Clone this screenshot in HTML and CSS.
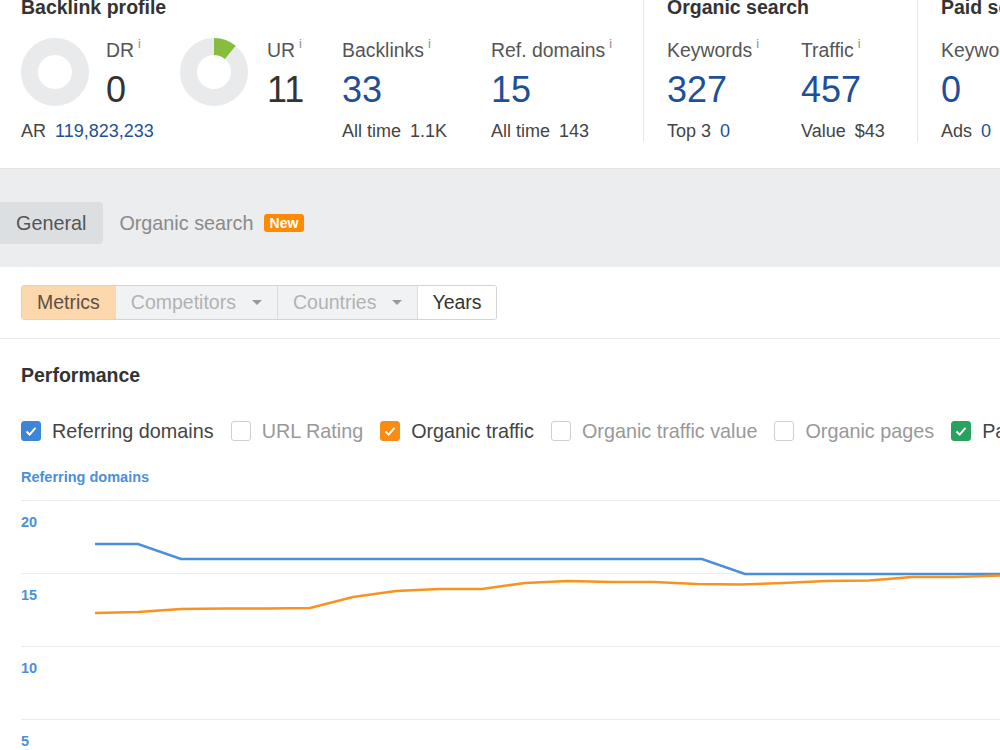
FILE: index.html
```html
<!DOCTYPE html>
<html lang="en">
<head>
  <meta charset="UTF-8">
  <title>Overview</title>
  <link rel="stylesheet" href="styles.css">
</head>
<body>

  <!-- 상단 지표 -->
  <div class="overview">
    <section class="block block-backlinks">
      <h3 class="block-title">Backlink profile</h3>
      <div class="metrics">
        <div class="metric metric-dr">
          <div class="rating-row">
            <svg class="donut" viewBox="0 0 68 68">
              <circle cx="34" cy="34" r="25.5" fill="none" stroke="#e9eaec" stroke-width="17"/>
            </svg>
            <div class="rating-text">
              <div class="metric-label">DR<sup>i</sup></div>
              <div class="metric-value dark">0</div>
            </div>
          </div>
          <div class="metric-sub">AR <span class="sub-val link">119,823,233</span></div>
        </div>
        <div class="metric metric-ur">
          <div class="rating-row">
            <svg class="donut" viewBox="0 0 68 68">
              <circle cx="34" cy="34" r="25.5" fill="none" stroke="#e9eaec" stroke-width="17"/>
              <circle cx="34" cy="34" r="25.5" fill="none" stroke="#87bd3d" stroke-width="17"
                      stroke-dasharray="17.6 160.2" transform="rotate(-90 34 34)"/>
            </svg>
            <div class="rating-text ur-text">
              <div class="metric-label">UR<sup>i</sup></div>
              <div class="metric-value dark">11</div>
            </div>
          </div>
        </div>
        <div class="metric metric-backlinks">
          <div class="metric-label">Backlinks<sup>i</sup></div>
          <div class="metric-value">33</div>
          <div class="metric-sub">All time <span class="sub-val">1.1K</span></div>
        </div>
        <div class="metric">
          <div class="metric-label">Ref. domains<sup>i</sup></div>
          <div class="metric-value">15</div>
          <div class="metric-sub">All time <span class="sub-val">143</span></div>
        </div>
      </div>
    </section>

    <section class="block block-organic">
      <h3 class="block-title">Organic search</h3>
      <div class="metrics">
        <div class="metric metric-keywords">
          <div class="metric-label">Keywords<sup>i</sup></div>
          <div class="metric-value">327</div>
          <div class="metric-sub">Top 3 <span class="sub-val link">0</span></div>
        </div>
        <div class="metric">
          <div class="metric-label">Traffic<sup>i</sup></div>
          <div class="metric-value">457</div>
          <div class="metric-sub">Value <span class="sub-val">$43</span></div>
        </div>
      </div>
    </section>

    <section class="block block-paid">
      <h3 class="block-title">Paid search</h3>
      <div class="metrics">
        <div class="metric">
          <div class="metric-label">Keywords<sup>i</sup></div>
          <div class="metric-value">0</div>
          <div class="metric-sub">Ads <span class="sub-val link">0</span></div>
        </div>
      </div>
    </section>
  </div>

  <!-- 탭 -->
  <div class="tabs-bar">
    <div class="tab active">General</div>
    <div class="tab">Organic search <span class="badge">New</span></div>
  </div>

  <!-- 필터 버튼 -->
  <div class="filters">
    <div class="btn-group">
      <div class="btn btn-active">Metrics</div>
      <div class="btn btn-muted">Competitors <span class="caret"></span></div>
      <div class="btn btn-muted">Countries <span class="caret"></span></div>
      <div class="btn btn-years">Years</div>
    </div>
  </div>

  <!-- 퍼포먼스 -->
  <div class="performance">
    <h3 class="perf-title">Performance</h3>
    <div class="checks">
      <label class="check-item on">
        <span class="box box-blue"><svg viewBox="0 0 20 20"><polyline points="5,10.5 8.5,14 15,6.5" fill="none" stroke="#fff" stroke-width="2.2"/></svg></span>
        Referring domains
      </label>
      <label class="check-item">
        <span class="box"></span>
        URL Rating
      </label>
      <label class="check-item on">
        <span class="box box-orange"><svg viewBox="0 0 20 20"><polyline points="5,10.5 8.5,14 15,6.5" fill="none" stroke="#fff" stroke-width="2.2"/></svg></span>
        Organic traffic
      </label>
      <label class="check-item">
        <span class="box"></span>
        Organic traffic value
      </label>
      <label class="check-item">
        <span class="box"></span>
        Organic pages
      </label>
      <label class="check-item on">
        <span class="box box-green"><svg viewBox="0 0 20 20"><polyline points="5,10.5 8.5,14 15,6.5" fill="none" stroke="#fff" stroke-width="2.2"/></svg></span>
        Paid traffic
      </label>
    </div>
    <div class="chart-title">Referring domains</div>
  </div>

  <div class="chart">
    <div class="grid-row">20</div>
    <div class="grid-row">15</div>
    <div class="grid-row">10</div>
    <div class="grid-row">5</div>
    <svg class="chart-lines" viewBox="0 0 1000 300">
      <polyline fill="none" stroke="#4a8fd9" stroke-width="2.5"
        points="95,44 138,44 181,59 702,59 745,74 1000,74"/>
      <polyline fill="none" stroke="#f7931e" stroke-width="2.5"
        points="95,113 138,112 181,109 224,108.5 267,108.5 310,108 353,97 396,91 439,89 482,89 525,83 568,81 611,82 654,82 697,84 740,84.5 783,83 826,81 869,80.5 912,77 955,77 1000,75.5"/>
    </svg>
  </div>

</body>
</html>
```

FILE: styles.css
```css
body {
  margin: 0;
  font-family: "Liberation Sans", Arial, sans-serif;
  color: #333;
  overflow: hidden;
}

/* 상단 지표 */
.overview {
  display: flex;
  padding-bottom: 26px;
  border-bottom: 1px solid #e2e4e6;
}
.block {
  box-sizing: border-box;
}
.block-backlinks {
  width: 643px;
  padding-left: 21px;
}
.block-organic {
  width: 274px;
  padding-left: 23px;
  border-left: 1px solid #e6e7e8;
}
.block-paid {
  flex: 1;
  padding-left: 23px;
  border-left: 1px solid #e6e7e8;
  white-space: nowrap;
  overflow: hidden;
}
.block-title {
  margin: -4px 0 0;
  font-size: 19.5px;
  line-height: 22px;
  font-weight: bold;
  color: #333;
  white-space: nowrap;
}
.metrics {
  display: flex;
  margin-top: 20px;
}
.metric-dr { width: 159px; }
.metric-ur { width: 162px; }
.metric-backlinks { width: 149px; }
.metric-keywords { width: 134px; }
.rating-row {
  display: flex;
  align-items: flex-start;
}
.donut {
  width: 68px;
  height: 68px;
  flex: none;
}
.rating-text { margin-left: 17px; }
.ur-text { margin-left: 19px; }
.metric-label {
  height: 22px;
  font-size: 19.4px;
  line-height: 22px;
  color: #555;
  white-space: nowrap;
}
.metric-label sup {
  font-size: 12.5px;
  line-height: 1;
  color: #8a8a8a;
  vertical-align: 9px;
  margin-left: 4px;
}
.metric-value {
  margin-top: 9px;
  font-size: 36px;
  line-height: 41px;
  color: #1e4f98;
}
.metric-value.dark { color: #333; }
.metric-sub {
  margin-top: 11px;
  font-size: 18px;
  line-height: 21px;
  color: #444;
  white-space: nowrap;
}
.sub-val { margin-left: 4px; }
.link { color: #1e4f98; }

/* 탭 */
.tabs-bar {
  display: flex;
  align-items: flex-start;
  height: 98px;
  padding-top: 33px;
  box-sizing: border-box;
  background: #ebedef;
}
.tab {
  display: flex;
  align-items: center;
  height: 42px;
  padding: 0 17px 0 16px;
  font-size: 19.8px;
  color: #8a8a8a;
}
.tab.active {
  background: #dcdfe2;
  color: #555;
  border-radius: 0 4px 4px 0;
}
.badge {
  margin-left: 10px;
  padding: 0 6px;
  height: 18px;
  line-height: 18px;
  border-radius: 3px;
  background: #ff8a00;
  color: #fff;
  font-size: 14px;
  font-weight: bold;
}

/* 필터 버튼 */
.filters {
  padding: 18px 21px;
  border-bottom: 1px solid #e9e9e9;
}
.btn-group {
  display: inline-flex;
  height: 35px;
  box-sizing: border-box;
  border: 1px solid #d4d4d4;
  border-radius: 3px;
  overflow: hidden;
}
.btn {
  display: flex;
  align-items: center;
  padding: 0 15px;
  font-size: 19.5px;
  border-left: 1px solid #dcdcdc;
}
.btn:first-child { border-left: none; }
.btn-active {
  background: #fdd8ac;
  color: #5c5047;
}
.btn-muted {
  background: #f1f2f3;
  color: #b2b2b2;
}
.btn-years {
  background: #fff;
  color: #333;
  padding: 0 14px;
}
.caret {
  margin-left: 16px;
  width: 0;
  height: 0;
  border-left: 5px solid transparent;
  border-right: 5px solid transparent;
  border-top: 5px solid #9a9a9a;
}

/* 퍼포먼스 */
.performance {
  padding: 0 21px;
}
.perf-title {
  margin: 25px 0 0;
  font-size: 19.5px;
  line-height: 22px;
  font-weight: bold;
  color: #333;
}
.checks {
  display: flex;
  align-items: center;
  margin-top: 34px;
  height: 22px;
  white-space: nowrap;
}
.check-item {
  display: flex;
  align-items: center;
  flex: none;
  margin-right: 17px;
  font-size: 19.8px;
  line-height: 22px;
  color: #999;
}
.check-item.on { color: #444; }
.box {
  width: 20px;
  height: 20px;
  box-sizing: border-box;
  margin-right: 11px;
  border: 1px solid #cfcfcf;
  border-radius: 3px;
  background: #fff;
}
.box svg {
  display: block;
  width: 100%;
  height: 100%;
}
.box-blue { background: #3b86d8; border-color: #3b86d8; }
.box-orange { background: #f98c14; border-color: #f98c14; }
.box-green { background: #28a35f; border-color: #28a35f; }
.chart-title {
  margin-top: 27px;
  font-size: 14.5px;
  line-height: 17px;
  font-weight: bold;
  color: #4a90d9;
}

/* 차트 */
.chart {
  position: relative;
  margin-top: 14px;
}
.grid-row {
  margin-left: 21px;
  height: 73px;
  box-sizing: border-box;
  padding-top: 13px;
  border-top: 1px solid #ebebeb;
  font-size: 14.5px;
  line-height: 17px;
  font-weight: bold;
  color: #4a90d9;
}
.chart-lines {
  position: absolute;
  left: 0;
  top: 0;
  width: 1000px;
  height: 300px;
}
```
